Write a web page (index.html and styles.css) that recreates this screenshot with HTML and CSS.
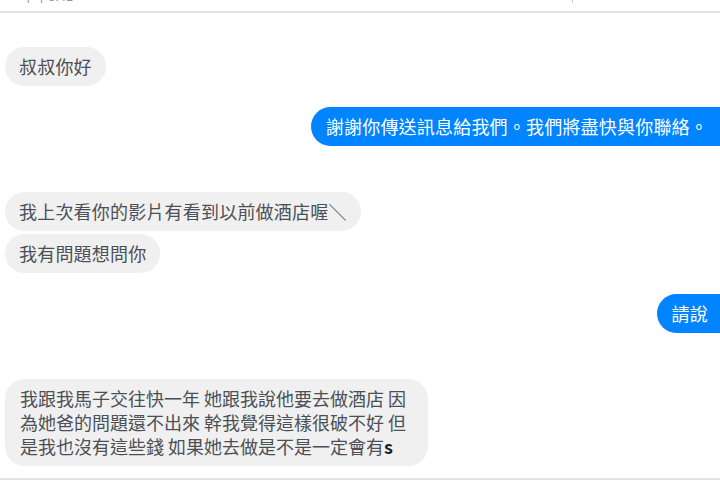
FILE: index.html
```html
<!DOCTYPE html>
<html lang="zh-Hant">
<head>
  <meta charset="UTF-8">
  <meta name="viewport" content="width=device-width, initial-scale=1.0">
  <title>Messenger</title>
  <link rel="stylesheet" href="styles.css">
</head>
<body>
  <div class="top-bar">
    <span class="top-text">下午8:41</span>
    <span class="top-tick"></span>
  </div>
  <div class="thread">
    <div class="group">
      <div class="msg them">叔叔你好</div>
    </div>
    <div class="group">
      <div class="msg me">謝謝你傳送訊息給我們。我們將盡快與你聯絡。</div>
    </div>
    <div class="group gap-big">
      <div class="msg them">我上次看你的影片有看到以前做酒店喔＼</div>
      <div class="msg them">我有問題想問你</div>
    </div>
    <div class="group">
      <div class="msg me">請說</div>
    </div>
    <div class="group gap-big">
      <div class="msg them wide">我跟我馬子交往快一年 她跟我說他要去做酒店 因為她爸的問題還不出來 幹我覺得這樣很破不好 但是我也沒有這些錢 如果她去做是不是一定會有<b>s</b></div>
    </div>
  </div>
  <div class="bottom-bar"></div>
</body>
</html>
```

FILE: styles.css
```css
body {
  margin: 0;
  padding: 0;
  width: 720px;
  height: 495px;
  overflow: hidden;
  background-color: #fff;
  font-family: "Noto Sans CJK TC", "Liberation Sans", sans-serif;
}
.top-bar {
  height: 11px;
  border-bottom: 2px solid #e1e2e5;
  overflow: hidden;
  display: flex;
}
.top-text {
  margin-left: 22px;
  margin-top: -12px;
  font-size: 13px;
  line-height: 15px;
  color: #90949c;
}
.top-tick {
  width: 1px;
  height: 3px;
  margin-left: auto;
  margin-right: 147px;
  background-color: #ccd0d5;
}
.thread {
  height: 467px;
  padding: 34px 0 0 5px;
  box-sizing: border-box;
  border-bottom: 2px solid #e1e2e5;
}
.group {
  display: flex;
  flex-direction: column;
  gap: 3px;
  margin-bottom: 21px;
}
.group.gap-big {
  margin-top: 46px;
}
.msg {
  font-size: 18px;
  line-height: 24px;
  padding: 7px 14px 8px 14px;
  border-radius: 20px;
  box-sizing: border-box;
  letter-spacing: 0.2px;
}
.msg.them {
  align-self: flex-start;
  background-color: #f1f0f0;
  color: #4b4f56;
}
.msg.wide {
  width: 423px;
  padding-left: 15px;
  padding-right: 12px;
  letter-spacing: 0;
}
.msg.wide b {
  color: #1d2129;
}
.msg.me {
  align-self: flex-end;
  background-color: #0084ff;
  color: #fff;
  padding-left: 15px;
  padding-right: 12px;
  white-space: nowrap;
  border-radius: 20px 0 0 20px;
}
.bottom-bar {
  height: 14px;
}
```
